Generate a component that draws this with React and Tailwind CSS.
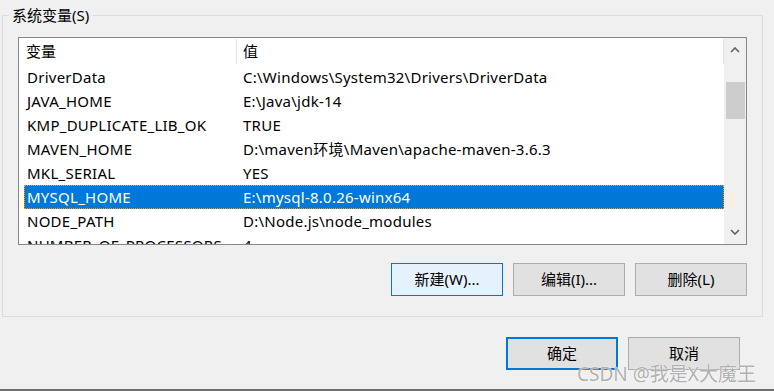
import React from 'react';

const rows = [
  ['DriverData', 'C:\\Windows\\System32\\Drivers\\DriverData'],
  ['JAVA_HOME', 'E:\\Java\\jdk-14'],
  ['KMP_DUPLICATE_LIB_OK', 'TRUE'],
  ['MAVEN_HOME', 'D:\\maven环境\\Maven\\apache-maven-3.6.3'],
  ['MKL_SERIAL', 'YES'],
  ['MYSQL_HOME', 'E:\\mysql-8.0.26-winx64'],
  ['NODE_PATH', 'D:\\Node.js\\node_modules'],
  ['NUMBER_OF_PROCESSORS', '4'],
];

const font = { fontFamily: '"Noto Sans", "Noto Sans CJK SC", sans-serif' };

const Chevron = ({ up }) => (
  <svg width="10" height="6" viewBox="0 0 10 6" className="text-[#606060]">
    <path
      d={up ? 'M1 5L5 1L9 5' : 'M1 1L5 5L9 1'}
      fill="none"
      stroke="currentColor"
      strokeWidth="1.6"
    />
  </svg>
);

const btn =
  'flex items-center justify-center w-[112px] h-[33px] border text-[15px] text-black';

export default function App() {
  return (
    <div
      className="relative w-[774px] h-[391px] bg-[#f0f0f0] overflow-hidden border-b-2 border-[#6e6e6e]"
      style={font}
    >
      {/* 系统变量 group box */}
      <div className="relative ml-[2px] mt-[15px] w-[761px] h-[302px] border border-[#dcdcdc] pl-[15px] pt-[21px]">
        <span className="absolute left-[6px] top-[-11px] px-[3px] bg-[#f0f0f0] text-[15px] leading-[20px] text-black">
          系统变量(S)
        </span>

        {/* list view */}
        <div className="flex w-[729px] h-[208px] border border-[#828790] bg-white overflow-hidden">
          <div className="flex-1 flex flex-col pl-[5px] text-[15px] text-black">
            <div className="flex h-[27px] shrink-0 items-center">
              <div className="w-[212px] pl-[2px] h-[25px] flex items-center">变量</div>
              <div className="h-[25px] w-px bg-[#e5e5e5]" />
              <div className="flex-1 pl-[6px] h-[25px] flex items-center">值</div>
              <div className="h-[25px] w-px bg-[#e5e5e5]" />
            </div>
            {rows.map(([name, value]) => {
              const sel = name === 'MYSQL_HOME';
              return (
                <div
                  key={name}
                  className={`flex h-[24px] shrink-0 items-center whitespace-nowrap tracking-[0.25px] ${
                    sel
                      ? 'bg-[#0078d7] text-white border border-dotted border-[#e39b3c]'
                      : 'border border-transparent'
                  }`}
                >
                  <div className="w-[215px] pl-[2px] overflow-hidden">{name}</div>
                  <div className="flex-1 pl-[3px]">{value}</div>
                </div>
              );
            })}
          </div>

          {/* scrollbar */}
          <div className="w-[22px] shrink-0 bg-[#f0f0f0] flex flex-col items-center">
            <div className="h-[24px] flex items-center justify-center">
              <Chevron up />
            </div>
            <div className="mt-[20px] w-[19px] h-[37px] bg-[#cdcdcd]" />
            <div className="flex-1" />
            <div className="h-[24px] flex items-center justify-center">
              <Chevron />
            </div>
          </div>
        </div>

        {/* list buttons */}
        <div className="flex justify-end gap-[10px] mt-[18px] pr-[15px]">
          <button className={`${btn} border-[#0078d7] bg-[#e5f1fb]`}>新建(W)...</button>
          <button className={`${btn} border-[#adadad] bg-[#e1e1e1]`}>编辑(I)...</button>
          <button className={`${btn} border-[#adadad] bg-[#e1e1e1]`}>删除(L)</button>
        </div>
      </div>

      {/* dialog buttons */}
      <div className="flex justify-end gap-[10px] mt-[20px] pr-[34px]">
        <button className={`${btn} w-[111px] border-2 border-[#0078d7] bg-[#e1e1e1]`}>确定</button>
        <button className={`${btn} w-[112px] border-[#adadad] bg-[#e1e1e1]`}>取消</button>
      </div>

      {/* watermark */}
      <span
        className="absolute left-[577px] top-[363px] text-[19px] leading-[22px] text-[#9a9a9a]/80"
        style={{ textShadow: '0 0 1px #fff, 0 0 1px #fff' }}
      >
        CSDN @我是X大魔王
      </span>
    </div>
  );
}
